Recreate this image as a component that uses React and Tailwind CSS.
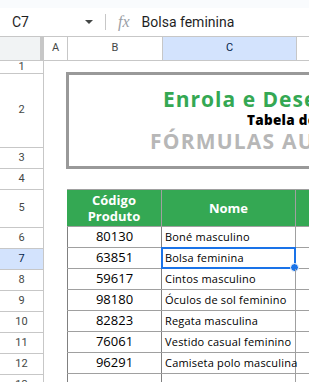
import React from "react";

const items = [
  { n: 6, code: "80130", name: "Boné masculino" },
  { n: 7, code: "63851", name: "Bolsa feminina" },
  { n: 8, code: "59617", name: "Cintos masculino" },
  { n: 9, code: "98180", name: "Óculos de sol feminino" },
  { n: 10, code: "82823", name: "Regata masculina" },
  { n: 11, code: "76061", name: "Vestido casual feminino" },
  { n: 12, code: "96291", name: "Camiseta polo masculina" },
];

const rowHeights = [
  { n: 1, h: "h-[13px]" },
  { n: 2, h: "h-[74px]" },
  { n: 3, h: "h-[21px]" },
  { n: 4, h: "h-[21px]" },
  { n: 5, h: "h-[38px]" },
];

function RowLabel({ n, h, active }) {
  return (
    <div
      className={`${h} flex items-center justify-center border-b border-[#c7c7c7] text-[11px] ${
        active ? "bg-[#d3e3fd] text-[#041e49]" : "text-[#444746]"
      }`}
    >
      {n}
    </div>
  );
}

export default function App() {
  return (
    <div className="h-[382px] w-[309px] overflow-hidden bg-white font-['Roboto',sans-serif]">
      {/* top strip */}
      <div className="h-2 bg-[#f9fbfd]" />

      {/* formula bar */}
      <div className="flex h-[29px] items-center border-b border-[#c7c7c7] text-[14px] text-[#1f1f1f]">
        <div className="w-[85px] pl-3">C7</div>
        <div className="h-0 w-0 border-x-[4px] border-t-[4px] border-x-transparent border-t-[#444746]" />
        <div className="ml-[12px] h-4 w-px bg-[#c7c7c7]" />
        <span className="ml-[12px] font-['Liberation_Serif',serif] text-[16px] italic text-[#9aa0a6]">fx</span>
        <span className="ml-[12px]">Bolsa feminina</span>
      </div>

      {/* column headers */}
      <div className="flex h-[24px] border-b border-[#c7c7c7] text-[11px] text-[#444746]">
        <div className="w-[44px] border-r-[4px] border-[#c7c7c7] bg-[#f1f3f4]" />
        <div className="flex w-[24px] items-center justify-center border-r border-[#c7c7c7]">A</div>
        <div className="flex w-[95px] items-center justify-center border-r border-[#c7c7c7]">B</div>
        <div className="flex w-[134px] items-center justify-center border-r border-[#c7c7c7] bg-[#d3e3fd] text-[#041e49]">
          C
        </div>
        <div className="flex-1" />
      </div>

      <div className="flex">
        {/* row headers */}
        <div className="w-[44px] shrink-0 border-r border-[#c7c7c7]">
          {rowHeights.map((r) => (
            <RowLabel key={r.n} n={r.n} h={r.h} />
          ))}
          {items.map((it) => (
            <RowLabel key={it.n} n={it.n} h="h-[21px]" active={it.n === 7} />
          ))}
          <RowLabel n={13} h="h-[21px]" />
        </div>

        {/* sheet */}
        <div className="flex-1 overflow-hidden font-['Open_Sans',sans-serif]">
          <div className="h-[128px] pt-[11px] pl-[22px]">
            <div className="h-[97px] w-[400px] border-[3px] border-[#999999] whitespace-nowrap">
              <div className="pt-[11px] pl-[94px] text-[21px] leading-[26px] font-bold tracking-[1px] text-[#34a853]">
                Enrola e Desenvolve
              </div>
              <div className="pl-[178px] text-[13.5px] leading-[16px] font-extrabold tracking-[0.3px] text-black">
                Tabela de Produtos
              </div>
              <div className="pl-[81px] text-[21px] leading-[26px] font-bold tracking-[1.2px] text-[#b7b7b7]">
                FÓRMULAS AUTOMÁTICAS
              </div>
            </div>
          </div>

          <div className="ml-[23px] w-[300px]">
            <div className="flex h-[38px] border-y border-[#a0a0a0] bg-[#34a853] text-[13px] font-bold leading-[16px] text-white">
              <div className="flex w-[95px] items-center justify-center border-r border-[#a0a0a0] text-center">
                Código
                <br />
                Produto
              </div>
              <div className="flex w-[134px] items-center justify-center border-r border-[#a0a0a0]">Nome</div>
              <div className="flex-1" />
            </div>
            {items.map((it) => (
              <div key={it.n} className="flex h-[21px] border-b border-[#a0a0a0]">
                <div className="flex w-[95px] items-center justify-center border-x border-[#808080] text-[13px] text-black">
                  {it.code}
                </div>
                <div className="relative flex w-[134px] items-center border-r border-[#a0a0a0] pl-[3px] text-[11px] tracking-[0.2px] text-black whitespace-nowrap">
                  {it.name}
                  {it.n === 7 && (
                    <div className="absolute -top-px -left-px -right-px -bottom-px border-2 border-[#1a73e8]">
                      <div className="absolute -right-[5px] -bottom-[5px] h-[9px] w-[9px] rounded-full border border-white bg-[#1a73e8]" />
                    </div>
                  )}
                </div>
                <div className="flex-1" />
              </div>
            ))}
            <div className="flex h-[21px]">
              <div className="w-[95px] border-x border-[#808080]" />
              <div className="w-[134px] border-r border-[#a0a0a0]" />
            </div>
          </div>
        </div>
      </div>
    </div>
  );
}
